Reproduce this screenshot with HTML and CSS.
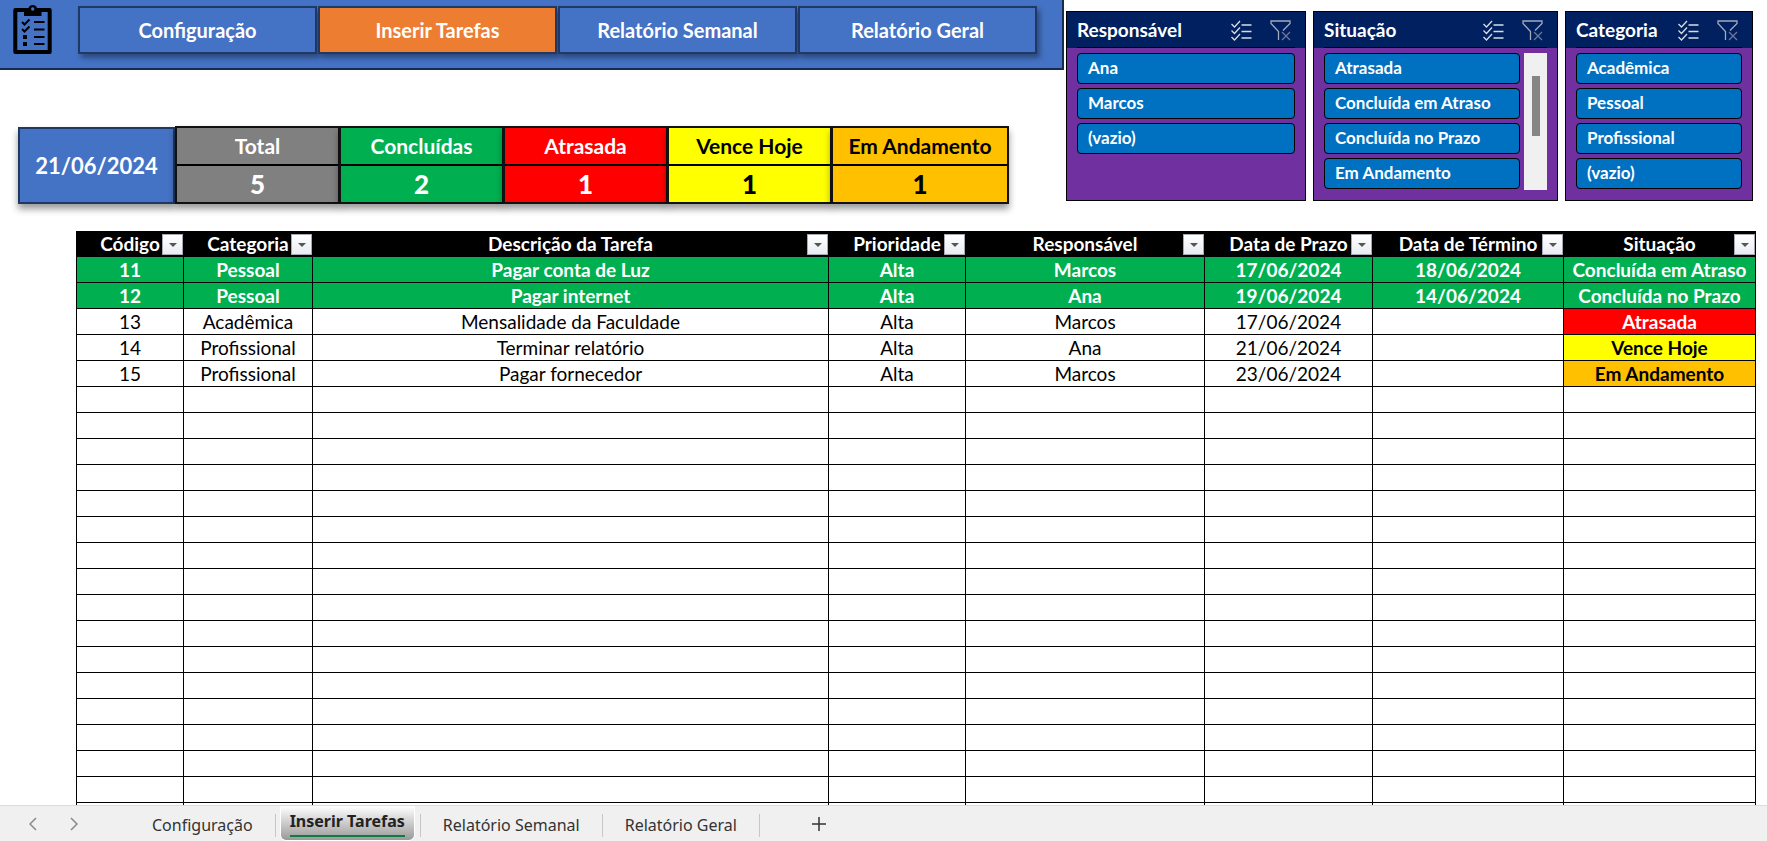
FILE: index.html
```html
<!DOCTYPE html>
<html lang="pt-BR">
<head>
  <meta charset="UTF-8" />
  <meta name="viewport" content="width=device-width, initial-scale=1.0"/>
  <title>Inserir Tarefas</title>
  <link rel="stylesheet" href="styles.css">
</head>
<body>

  <!-- Shared icons -->
  <svg class="sprite" width="0" height="0" aria-hidden="true">
    <symbol id="icon-multi" viewBox="0 0 21 20">
      <path d="M0.5 3.5l3 3 5.500-6M0.500 10l3 3 5.500-6M0.500 16.500l3 3 5.500-6" fill="none" stroke="#d9dce4" stroke-width="1.300"/>
      <path d="M10.500 4.500h10M10.500 11h10M10.500 17.500h10" fill="none" stroke="#d9dce4" stroke-width="1.300"/>
    </symbol>
    <symbol id="icon-clear" viewBox="0 0 21 21">
      <path d="M8.500 20v-8.500L1 3.500V1h19v2.500L13 10.500M8.500 20" fill="none" stroke="#a3aabc" stroke-width="1.300"/>
      <path d="M12 12l8 8M20 12l-8 8" fill="none" stroke="#6c7897" stroke-width="1.300"/>
    </symbol>
  </svg>

  <div class="sheet">
    <div class="top">
      <div class="top-left">
        <header class="navbar">
          <svg class="logo" viewBox="0 0 40 52" aria-hidden="true">
            <path d="M2.300 6h34.400v42H2.300z" fill="none" stroke="#000" stroke-width="4" stroke-linejoin="round"/>
            <path d="M11 4h4.500c1-4 7.500-4 8.500 0h4.500v8H11z" fill="#000"/>
            <circle cx="19.700" cy="5" r="1.700" fill="#4472c4"/>
            <path d="M9 18l2.500 2.500 5-5M9 25l2.500 2.500 5-5" fill="none" stroke="#000" stroke-width="2"/>
            <path d="M10 31h4v4h-4zM10 38h4v4h-4z" fill="#000"/>
            <path d="M21 18h10.500M21 25.500h10.500M21 33h10.500M21 40h10.500" stroke="#000" stroke-width="2.200"/>
          </svg>
          <nav class="nav">
            <a href="#configuracao" class="nav-link">Configuração</a>
            <a href="#inserir" class="nav-link active">Inserir Tarefas</a>
            <a href="#semanal" class="nav-link">Relatório Semanal</a>
            <a href="#geral" class="nav-link">Relatório Geral</a>
          </nav>
        </header>

        <div class="summary">
          <div class="date">21/06/2024</div>
          <div class="card gray"><span>Total</span><strong>5</strong></div>
          <div class="card green"><span>Concluídas</span><strong>2</strong></div>
          <div class="card red"><span>Atrasada</span><strong>1</strong></div>
          <div class="card yellow"><span>Vence Hoje</span><strong>1</strong></div>
          <div class="card orange wide"><span>Em Andamento</span><strong>1</strong></div>
        </div>
      </div>

      <div class="slicers">
        <section class="slicer slicer-resp">
          <div class="slicer-head">
            <h2>Responsável</h2>
            <button class="icon-btn" aria-label="Seleção múltipla"><svg><use href="#icon-multi"/></svg></button>
            <button class="icon-btn" aria-label="Limpar filtro"><svg><use href="#icon-clear"/></svg></button>
          </div>
          <div class="slicer-body">
            <div class="slicer-list">
              <button>Ana</button>
              <button>Marcos</button>
              <button>(vazio)</button>
            </div>
          </div>
        </section>

        <section class="slicer slicer-sit">
          <div class="slicer-head">
            <h2>Situação</h2>
            <button class="icon-btn" aria-label="Seleção múltipla"><svg><use href="#icon-multi"/></svg></button>
            <button class="icon-btn" aria-label="Limpar filtro"><svg><use href="#icon-clear"/></svg></button>
          </div>
          <div class="slicer-body">
            <div class="slicer-list">
              <button>Atrasada</button>
              <button>Concluída em Atraso</button>
              <button>Concluída no Prazo</button>
              <button>Em Andamento</button>
            </div>
            <div class="scrollbar"><div class="thumb"></div></div>
          </div>
        </section>

        <section class="slicer slicer-cat">
          <div class="slicer-head">
            <h2>Categoria</h2>
            <button class="icon-btn" aria-label="Seleção múltipla"><svg><use href="#icon-multi"/></svg></button>
            <button class="icon-btn" aria-label="Limpar filtro"><svg><use href="#icon-clear"/></svg></button>
          </div>
          <div class="slicer-body">
            <div class="slicer-list">
              <button>Acadêmica</button>
              <button>Pessoal</button>
              <button>Profissional</button>
              <button>(vazio)</button>
            </div>
          </div>
        </section>
      </div>
    </div>

    <div class="table-wrap">
      <table class="tasks">
        <colgroup>
          <col class="c-codigo"><col class="c-categoria"><col><col class="c-prioridade">
          <col class="c-resp"><col class="c-prazo"><col class="c-termino"><col class="c-situacao">
        </colgroup>
        <thead>
          <tr>
            <th>Código<button class="filter" aria-label="Filtrar Código"></button></th>
            <th>Categoria<button class="filter" aria-label="Filtrar Categoria"></button></th>
            <th>Descrição da Tarefa<button class="filter" aria-label="Filtrar Descrição"></button></th>
            <th>Prioridade<button class="filter" aria-label="Filtrar Prioridade"></button></th>
            <th>Responsável<button class="filter" aria-label="Filtrar Responsável"></button></th>
            <th>Data de Prazo<button class="filter" aria-label="Filtrar Data de Prazo"></button></th>
            <th>Data de Término<button class="filter" aria-label="Filtrar Data de Término"></button></th>
            <th>Situação<button class="filter" aria-label="Filtrar Situação"></button></th>
          </tr>
        </thead>
        <tbody>
          <tr class="done"><td>11</td><td>Pessoal</td><td>Pagar conta de Luz</td><td>Alta</td><td>Marcos</td><td>17/06/2024</td><td>18/06/2024</td><td>Concluída em Atraso</td></tr>
          <tr class="done"><td>12</td><td>Pessoal</td><td>Pagar internet</td><td>Alta</td><td>Ana</td><td>19/06/2024</td><td>14/06/2024</td><td>Concluída no Prazo</td></tr>
          <tr><td>13</td><td>Acadêmica</td><td>Mensalidade da Faculdade</td><td>Alta</td><td>Marcos</td><td>17/06/2024</td><td></td><td class="status red">Atrasada</td></tr>
          <tr><td>14</td><td>Profissional</td><td>Terminar relatório</td><td>Alta</td><td>Ana</td><td>21/06/2024</td><td></td><td class="status yellow">Vence Hoje</td></tr>
          <tr><td>15</td><td>Profissional</td><td>Pagar fornecedor</td><td>Alta</td><td>Marcos</td><td>23/06/2024</td><td></td><td class="status orange">Em Andamento</td></tr>
          <tr><td></td><td></td><td></td><td></td><td></td><td></td><td></td><td></td></tr>
          <tr><td></td><td></td><td></td><td></td><td></td><td></td><td></td><td></td></tr>
          <tr><td></td><td></td><td></td><td></td><td></td><td></td><td></td><td></td></tr>
          <tr><td></td><td></td><td></td><td></td><td></td><td></td><td></td><td></td></tr>
          <tr><td></td><td></td><td></td><td></td><td></td><td></td><td></td><td></td></tr>
          <tr><td></td><td></td><td></td><td></td><td></td><td></td><td></td><td></td></tr>
          <tr><td></td><td></td><td></td><td></td><td></td><td></td><td></td><td></td></tr>
          <tr><td></td><td></td><td></td><td></td><td></td><td></td><td></td><td></td></tr>
          <tr><td></td><td></td><td></td><td></td><td></td><td></td><td></td><td></td></tr>
          <tr><td></td><td></td><td></td><td></td><td></td><td></td><td></td><td></td></tr>
          <tr><td></td><td></td><td></td><td></td><td></td><td></td><td></td><td></td></tr>
          <tr><td></td><td></td><td></td><td></td><td></td><td></td><td></td><td></td></tr>
          <tr><td></td><td></td><td></td><td></td><td></td><td></td><td></td><td></td></tr>
          <tr><td></td><td></td><td></td><td></td><td></td><td></td><td></td><td></td></tr>
          <tr><td></td><td></td><td></td><td></td><td></td><td></td><td></td><td></td></tr>
          <tr><td></td><td></td><td></td><td></td><td></td><td></td><td></td><td></td></tr>
          <tr><td></td><td></td><td></td><td></td><td></td><td></td><td></td><td></td></tr>
        </tbody>
      </table>
    </div>
  </div>

  <footer class="tabs">
    <div class="arrows">
      <button aria-label="Anterior"><svg viewBox="0 0 8 14"><path d="M7 1L1 7l6 6"/></svg></button>
      <button aria-label="Próxima"><svg viewBox="0 0 8 14"><path d="M1 1l6 6-6 6"/></svg></button>
    </div>
    <a href="#configuracao" class="tab">Configuração</a>
    <a href="#inserir" class="tab current"><span>Inserir Tarefas</span></a>
    <a href="#semanal" class="tab">Relatório Semanal</a>
    <a href="#geral" class="tab">Relatório Geral</a>
    <button class="add" aria-label="Nova planilha"><svg viewBox="0 0 14 14"><path d="M7 0v14M0 7h14"/></svg></button>
  </footer>

</body>
</html>
```
FILE: styles.css
```css
* {
  box-sizing: border-box;
}

body {
  margin: 0;
  height: 100vh;
  display: flex;
  flex-direction: column;
  overflow: hidden;
  background: #fff;
  color: #000;
  font-family: Lato, "Liberation Sans", sans-serif;
}

button {
  font-family: inherit;
  cursor: pointer;
}

a {
  text-decoration: none;
}

.sprite {
  position: absolute;
}

.sheet {
  flex: 1;
  min-height: 0;
  overflow: hidden;
}

.top {
  display: flex;
  gap: 2px;
  padding-right: 14px;
}

.top-left {
  flex: 1;
}

/* Navigation */
.navbar {
  display: flex;
  gap: 25px;
  height: 70px;
  padding: 4px 25px 0 13px;
  background: #4472c4;
  border-right: 2px solid #172c51;
  border-bottom: 2px solid #172c51;
}

.logo {
  width: 40px;
  height: 52px;
}

.nav {
  flex: 1;
  display: flex;
  gap: 1px;
  height: 48px;
  margin-top: 2px;
}

.nav-link {
  flex: 1;
  display: flex;
  align-items: center;
  justify-content: center;
  background: #4472c4;
  border: 2px solid #203864;
  box-shadow: 3px 4px 5px rgba(0, 0, 0, 0.35);
  color: #fff;
  font-size: 20px;
  font-weight: bold;
}

.nav-link.active {
  background: #ed7d31;
}

/* Summary cards */
.summary {
  display: flex;
  margin: 56px 55px 0 18px;
  height: 78px;
  font-weight: bold;
}

.date {
  display: flex;
  align-items: center;
  justify-content: center;
  width: 157px;
  margin-top: 1px;
  background: #4472c4;
  border: 2px solid #203864;
  box-shadow: 0 5px 7px rgba(0, 0, 0, 0.4);
  color: #fff;
  font-size: 22px;
}

.card {
  flex: 1;
  display: grid;
  grid-template-rows: 38px 36px;
  border: 2px solid #111;
  margin-right: -1px;
  box-shadow: 0 5px 7px rgba(0, 0, 0, 0.4);
  text-align: center;
  font-size: 21px;
  line-height: 36px;
}

.card span {
  border-bottom: 2px solid #000;
}

.card strong {
  font-size: 26px;
}

.card.wide {
  flex: 0 0 178px;
  margin-right: 0;
}

.gray {
  background: #808080;
  color: #fff;
}

.green {
  background: #00b050;
  color: #fff;
}

.red {
  background: #f00;
  color: #fff;
}

.yellow {
  background: #ff0;
}

.orange {
  background: #ffc000;
}

/* Slicers */
.slicers {
  display: flex;
  gap: 7px;
  margin-top: 11px;
  height: 190px;
}

.slicer {
  background: #7030a0;
  border: 1px solid #000;
}

.slicer-resp {
  width: 240px;
}

.slicer-sit {
  width: 245px;
}

.slicer-cat {
  width: 188px;
}

.slicer-head {
  display: flex;
  align-items: center;
  gap: 18px;
  height: 36px;
  padding: 0 14px 0 10px;
  background: #002060;
}

.slicer-head h2 {
  flex: 1;
  margin: 0;
  color: #fff;
  font-size: 19px;
  line-height: 34px;
}

.icon-btn {
  width: 21px;
  height: 21px;
  padding: 0;
  border: none;
  background: none;
}

.icon-btn svg {
  display: block;
  width: 21px;
  height: 21px;
}

.slicer-body {
  display: flex;
  gap: 4px;
  margin: -1px 10px 0;
  padding-top: 5px;
  border-top: 1px solid #000;
}

.slicer-list {
  flex: 1;
  display: flex;
  flex-direction: column;
  gap: 4px;
}

.slicer-list button {
  height: 31px;
  padding: 0 0 2px 10px;
  background: #0070c0;
  border: 1px solid #000;
  border-radius: 4px;
  color: #fff;
  font-size: 17px;
  font-weight: bold;
  text-align: left;
  white-space: nowrap;
}

.scrollbar {
  width: 23px;
  height: 137px;
  padding-top: 23px;
  background: #f0f0f0;
}

.thumb {
  width: 8px;
  height: 60px;
  margin: 0 auto;
  background: #858585;
}

/* Task table */
.table-wrap {
  padding: 27px 11px 0 76px;
}

.tasks {
  width: 100%;
  table-layout: fixed;
  border-collapse: collapse;
  font-size: 19px;
  line-height: 24px;
  text-align: center;
}

.c-codigo { width: 107px; }
.c-categoria { width: 129px; }
.c-prioridade { width: 137px; }
.c-resp { width: 239px; }
.c-prazo { width: 168px; }
.c-termino { width: 191px; }
.c-situacao { width: 192px; }

.tasks th,
.tasks td {
  height: 26px;
  padding: 0;
  border: 1px solid #000;
  white-space: nowrap;
}

.tasks th {
  position: relative;
  height: 25px;
  background: #000;
  color: #fff;
}

.filter {
  position: absolute;
  right: 0;
  bottom: 1px;
  width: 21px;
  height: 21px;
  padding: 0;
  border: 1px solid #a6a9b3;
  background: linear-gradient(#fff, #e9ecf2);
}

.filter::after {
  content: "";
  display: block;
  width: 0;
  margin: 0 auto;
  border: 4px solid transparent;
  border-top-color: #555;
  border-bottom: none;
}

.done {
  background: #00b050;
  color: #fff;
  font-weight: bold;
}

.status {
  font-weight: bold;
}

/* Sheet tabs */
.tabs {
  display: flex;
  height: 36px;
  background: #f0f0f0;
  border-top: 1px solid #dcdcdc;
  font-family: "Noto Sans", "Open Sans", sans-serif;
  font-size: 16px;
}

.arrows {
  display: flex;
  align-items: center;
  gap: 33px;
  width: 130px;
  padding-left: 29px;
}

.arrows button,
.add {
  display: flex;
  padding: 0;
  border: none;
  background: none;
}

.arrows svg {
  width: 8px;
  height: 14px;
}

.tabs path {
  fill: none;
  stroke: #888;
  stroke-width: 1.5;
}

.tab {
  margin: 8px 0 4px;
  padding: 0 22px;
  border-right: 1px solid #c6c6c6;
  color: #333;
  line-height: 23px;
  white-space: nowrap;
}

.tab.current {
  height: 35px;
  margin: 0 5px 0 4px;
  padding: 0 9px 2px;
  background: linear-gradient(#fff, #999);
  border: 1px solid #fff;
  border-top: none;
  border-radius: 0 0 6px 6px;
  color: #222;
  font-weight: bold;
}

.tab.current + .tab {
  border-left: 1px solid #c6c6c6;
}

.tab.current span {
  display: block;
  height: 31px;
  border-bottom: 2px solid #107c41;
  line-height: 31px;
}

.add {
  align-items: center;
  margin-left: 52px;
}

.add svg {
  width: 14px;
  height: 14px;
}

.add path {
  stroke: #333;
}
```
